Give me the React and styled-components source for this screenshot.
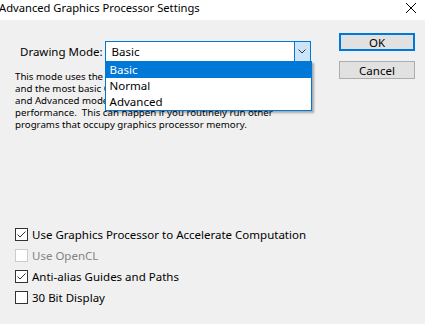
import styled, { createGlobalStyle } from "styled-components";

const GlobalStyle = createGlobalStyle`
  html, body { margin: 0; padding: 0; }
  body {
    width: 425px;
    height: 324px;
    overflow: hidden;
    background: #f0f0f0;
    font-family: "Noto Sans", "Liberation Sans", sans-serif;
    color: #000;
  }
`

const Window = styled.div`
  display: flex;
  flex-direction: column;
  height: 324px;
`

const TitleBar = styled.div`
  height: 20px;
  background: #fff;
  display: flex;
  justify-content: space-between;
  align-items: flex-start;
`

const Title = styled.div`
  font-size: 11.2px;
  line-height: 16px;
  margin-left: -1px;
`

const Close = styled.svg`
  margin: 3px 9px 0 0;
`

const Body = styled.div`
  flex: 1;
  display: flex;
`

const Main = styled.div`
  padding-left: 15px;
  display: flex;
  flex-direction: column;
`

const ModeRow = styled.div`
  margin: 21px 0 0 5px;
  display: flex;
  align-items: center;
  gap: 2px;
  font-size: 11.5px;
`

const SelectBox = styled.div`
  position: relative;
  width: 204px;
  height: 19px;
  border: 1px solid #0078d7;
  background: #fff;
  display: flex;
`

const Value = styled.div`
  flex: 1;
  padding-left: 6px;
  line-height: 19px;
`

const Arrow = styled.div`
  width: 15px;
  border-left: 1px solid #0078d7;
  background: #cce4f7;
  display: flex;
  align-items: center;
  justify-content: center;
`

const List = styled.div`
  position: absolute;
  top: 100%;
  left: -1px;
  width: 205px;
  border: 1px solid #0078d7;
  background: #fff;
  box-shadow: 2px 2px 2px rgba(0, 0, 0, 0.3);
  z-index: 2;
`

const Item = styled.div`
  height: 16px;
  line-height: 16px;
  padding-left: 4px;
  background: ${p => (p.$active ? "#0078d7" : "#fff")};
  color: ${p => (p.$active ? "#fff" : "#000")};
`

const Desc = styled.div`
  margin-top: 9px;
  font-size: 9.7px;
  line-height: 12px;
  white-space: pre-wrap;
`

const Checks = styled.div`
  margin-top: 93px;
  display: flex;
  flex-direction: column;
`

const CheckRow = styled.label`
  height: 21px;
  display: flex;
  align-items: center;
  gap: 4px;
  font-size: 11.5px;
  color: ${p => (p.$disabled ? "#838383" : "#000")};
`

const Box = styled.span`
  width: 11px;
  height: 11px;
  border: 1px solid ${p => (p.$disabled ? "#cccccc" : "#333")};
  background: #fff;
  display: flex;
  align-items: center;
  justify-content: center;
`

const Side = styled.div`
  margin-left: auto;
  margin-right: 10px;
  padding-top: 13px;
  display: flex;
  flex-direction: column;
  gap: 10px;
`

const Button = styled.div`
  width: 76px;
  height: 18px;
  box-sizing: border-box;
  border: ${p => (p.$primary ? "2px solid #0078d7" : "1px solid #adadad")};
  background: #e1e1e1;
  font-size: 11.5px;
  display: flex;
  align-items: center;
  justify-content: center;
`

const Check = ({ label, checked, disabled }) => (
  <CheckRow $disabled={disabled}>
    <Box $disabled={disabled}>
      {checked && (
        <svg width="11" height="11" viewBox="0 0 11 11">
          <path d="M1.5 5.5 L4 8 L9.5 2.5" fill="none" stroke="#333" strokeWidth="1" />
        </svg>
      )}
    </Box>
    {label}
  </CheckRow>
)

const description = `This mode uses the least amount of graphics processor memory
and the most basic OpenGL features. Try this mode if Normal
and Advanced modes cause display problems or slow
performance.  This can happen if you routinely run other
programs that occupy graphics processor memory.`

export default function App() {
  return (
    <Window>
      <GlobalStyle />
      <TitleBar>
        <Title>Advanced Graphics Processor Settings</Title>
        <Close width="10" height="10" viewBox="0 0 10 10">
          <path d="M0 0 L10 10 M10 0 L0 10" stroke="#000" strokeWidth="1" />
        </Close>
      </TitleBar>
      <Body>
        <Main>
          <ModeRow>
            <span>Drawing Mode:</span>
            <SelectBox>
              <Value>Basic</Value>
              <Arrow>
                <svg width="8" height="5" viewBox="0 0 8 5">
                  <path d="M0.5 0.5 L4 4 L7.5 0.5" fill="none" stroke="#333" strokeWidth="1" />
                </svg>
              </Arrow>
              <List>
                <Item $active>Basic</Item>
                <Item>Normal</Item>
                <Item>Advanced</Item>
              </List>
            </SelectBox>
          </ModeRow>
          <Desc>{description}</Desc>
          <Checks>
            <Check checked label="Use Graphics Processor to Accelerate Computation" />
            <Check disabled label="Use OpenCL" />
            <Check checked label="Anti-alias Guides and Paths" />
            <Check label="30 Bit Display" />
          </Checks>
        </Main>
        <Side>
          <Button $primary>OK</Button>
          <Button>Cancel</Button>
        </Side>
      </Body>
    </Window>
  )
}
